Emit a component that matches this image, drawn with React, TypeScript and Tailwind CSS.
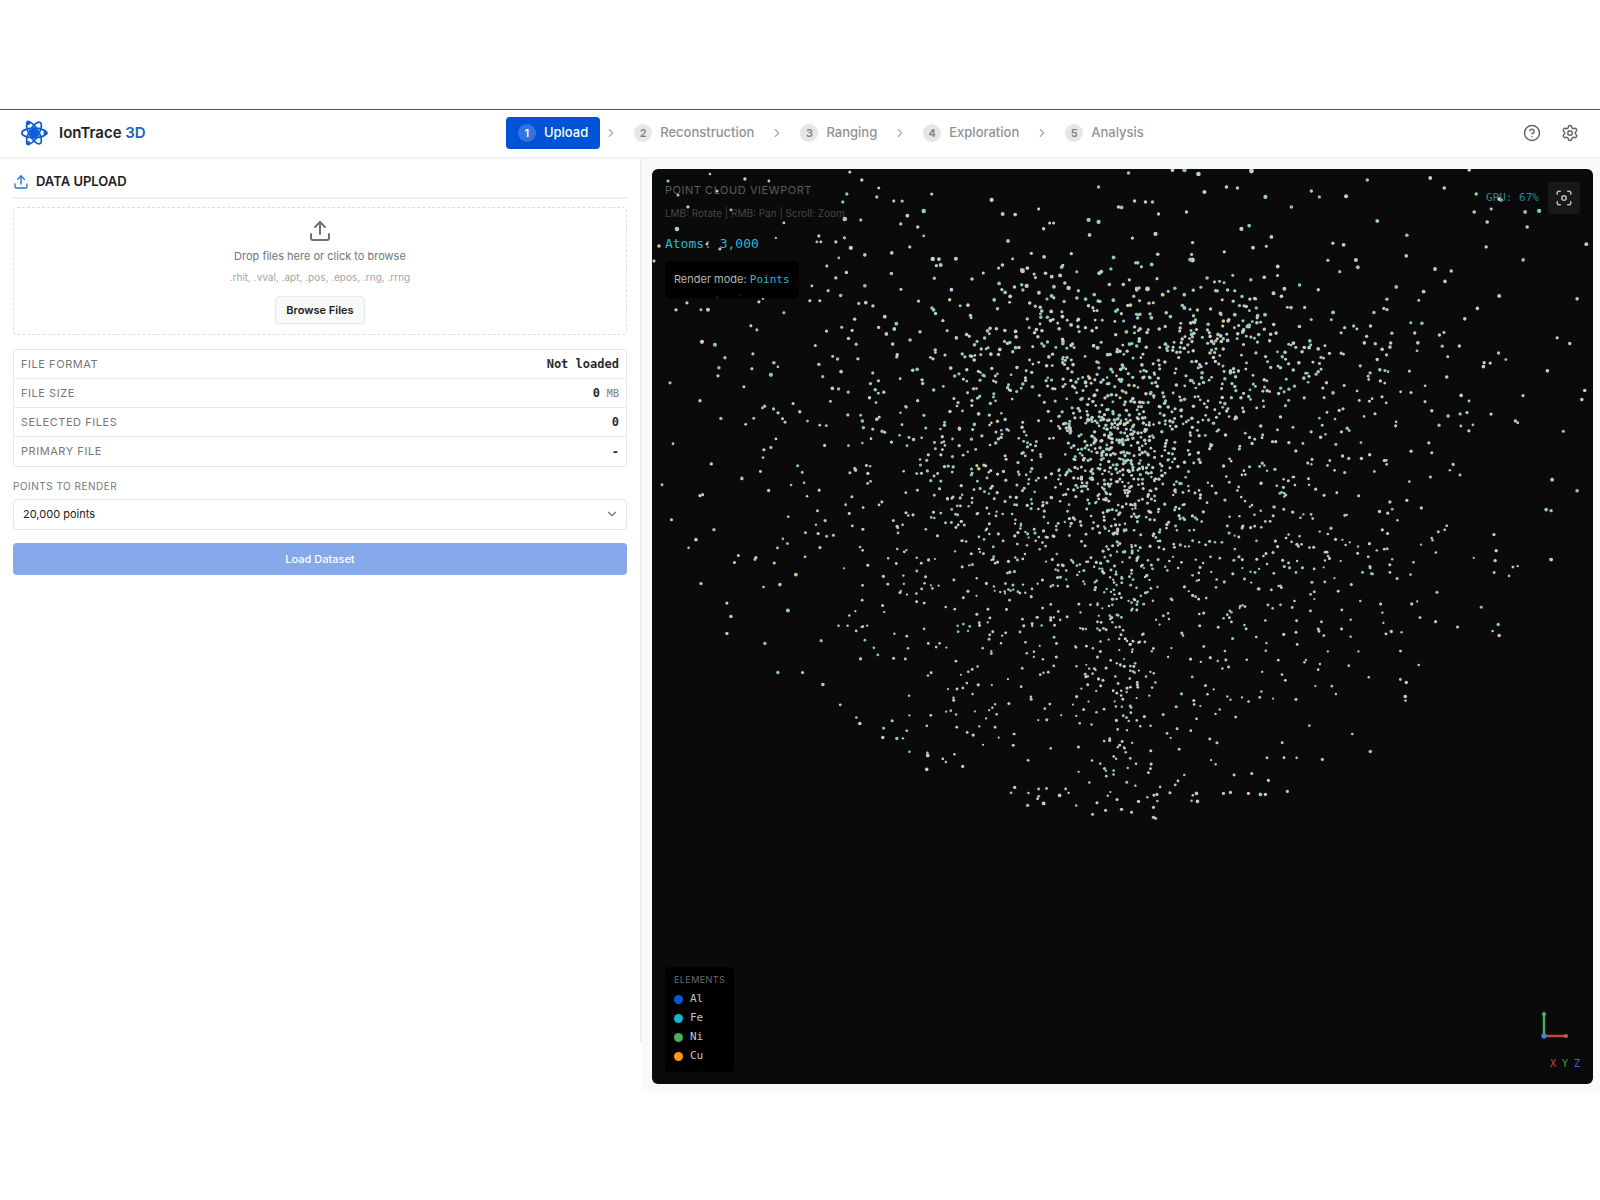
import React, { useMemo, useState } from 'react';
import { ChevronDown, ChevronRight, CircleHelp, Focus, Settings, Upload } from 'lucide-react';

type Point = { x: number; y: number; r: number; color: string };

const STEPS = ['Upload', 'Reconstruction', 'Ranging', 'Exploration', 'Analysis'];

const FILE_INFO = [
  { label: 'File Format', value: 'Not loaded' },
  { label: 'File Size', value: '0', unit: 'MB' },
  { label: 'Selected Files', value: '0' },
  { label: 'Primary File', value: '-' },
];

const ELEMENTS = [
  { name: 'Al', color: 'bg-[#0a56d6]' },
  { name: 'Fe', color: 'bg-[#17b5d0]' },
  { name: 'Ni', color: 'bg-[#4caf50]' },
  { name: 'Cu', color: 'bg-[#ff9810]' },
];

const POINT_COLORS = ['#c9cdca', '#c9cdca', '#c9cdca', '#8fc9bd', '#8fc9bd', '#a9d3ca', '#c9cdca', '#9fcfc4'];

// atoms close to the camera, [x, y, radius]
const NEAR_ATOMS = [
  [16, 12, 1.6], [58, 5, 1.3], [93, 10, 1.7], [117, 12, 1.4], [26, 26, 1.5], [65, 22, 1.6],
  [36, 38, 1.6], [79, 41, 1.4], [25, 60, 2.2], [7, 77, 1.8], [2, 92, 1.5], [55, 75, 1.5],
  [68, 80, 1.5], [132, 54, 1.4], [124, 69, 1.1], [198, 3, 1.6], [210, 11, 1.7], [227, 19, 1.5],
  [225, 28, 1.6], [195, 25, 1.7], [191, 33, 1.6], [242, 32, 1.5], [280, 25, 1.6], [272, 42, 2.2],
  [193, 50, 2.3], [209, 51, 1.6], [249, 55, 1.6], [266, 58, 1.7], [272, 67, 1.4], [167, 67, 1.6],
  [165, 73, 1.4], [169, 73, 1.4], [184, 73, 1.6], [199, 79, 2.1], [213, 86, 1.8], [187, 89, 1.3],
  [240, 84, 1.8], [258, 78, 1.6], [281, 90, 2.2], [289, 96, 2], [175, 97, 1.5], [184, 109, 1.7],
  [160, 117, 1.4], [65, 128, 1.3], [88, 126, 1.3], [35, 134, 1.6], [24, 141, 1.7], [49, 141, 1.5],
  [56, 141, 2], [107, 133, 1.6], [111, 130, 1.2], [132, 144, 1.5], [99, 157, 1.5], [105, 161, 1.6],
  [158, 132, 1.5], [168, 132, 1.5], [50, 173, 2.1], [63, 176, 2], [73, 189, 1.7], [67, 199, 1.7],
  [66, 207, 1.6], [101, 185, 1.6], [122, 194, 1.8], [126, 198, 1.3], [119, 206, 2.1], [100, 200, 1.5],
  [18, 214, 1.6], [48, 232, 1.7], [92, 218, 1.5], [21, 275, 1.4], [10, 316, 1.5], [48, 327, 1.6],
  [90, 310, 1.6], [44, 371, 1.8], [62, 361, 1.7], [104, 389, 1.6], [103, 391, 1.4], [49, 415, 1.6],
  [128, 416, 1.8], [144, 406, 1.9], [136, 442, 2], [79, 448, 1.8], [75, 465, 1.7], [113, 475, 1.7],
  [126, 504, 1.7], [171, 516, 1.8], [208, 555, 1.8], [231, 569, 1.7], [245, 570, 1.7], [276, 587, 1.9],
  [275, 601, 1.8], [311, 598, 1.6], [340, 31, 2.1], [387, 40, 1.5], [351, 45, 2], [398, 54, 1.5],
  [402, 54, 1.5], [437, 51, 2.1], [447, 53, 2.1], [438, 66, 1.9], [447, 18, 1.7], [467, 38, 1.8],
  [483, 32, 1.7], [494, 33, 1.7], [501, 33, 1.8], [477, 4, 1.8], [521, 1, 1.9], [533, 1, 2.2],
  [547, 5, 2.3], [553, 23, 2], [575, 18, 1.8], [586, 19, 1.8], [600, 2, 2.4], [614, 28, 2.1],
  [590, 60, 2.1], [541, 91, 2.5], [504, 65, 2.1], [507, 45, 1.7], [535, 43, 1.7], [620, 68, 1.9],
  [361, 90, 1.4], [371, 102, 2.3], [375, 117, 2.1], [496, 120, 2.4], [417, 119, 2.2], [400, 127, 2],
  [640, 38, 1.8], [660, 22, 1.7], [668, 28, 1.6], [716, 11, 1.8], [726, 52, 1.9], [779, 9, 1.9],
  [793, 19, 1.8], [755, 87, 1.8], [818, 1, 1.8], [825, 25, 1.7], [836, 53, 1.8], [823, 43, 1.8],
  [850, 31, 1.7], [848, 30, 1.9], [874, 43, 1.9], [840, 40, 1.5], [888, 42, 2.1], [876, 58, 1.8],
  [835, 78, 1.7], [926, 130, 1.8], [872, 91, 1.8], [848, 127, 2], [906, 169, 1.6], [900, 342, 1.7],
  [895, 341, 1.8], [901, 311, 1.9], [926, 322, 1.8], [900, 391, 1.9], [847, 456, 1.7], [848, 467, 1.8],
  [845, 382, 1.7], [844, 392, 1.7], [843, 404, 1.5], [754, 528, 1.8], [755, 514, 1.7], [719, 583, 1.8],
  [671, 591, 1.7], [740, 463, 1.7], [441, 646, 1.6], [454, 642, 1.6], [502, 649, 1.7], [504, 650, 1.7],
  [480, 644, 1.5], [545, 625, 1.8], [546, 633, 1.8], [609, 626, 1.9], [636, 623, 1.6], [392, 635, 1.9],
  [376, 637, 1.7], [363, 619, 1.7], [408, 627, 1.8], [470, 641, 1.7], [487, 633, 1.7], [502, 639, 1.6],
  [572, 625, 1.6], [579, 624, 1.6], [597, 625, 1.6], [614, 626, 1.7], [617, 612, 1.6],
];

function mulberry(seed: number) {
  let s = seed;
  return () => {
    s = (s + 0x6d2b79f5) | 0;
    let t = Math.imul(s ^ (s >>> 15), 1 | s);
    t = (t + Math.imul(t ^ (t >>> 7), 61 | t)) ^ t;
    return ((t ^ (t >>> 14)) >>> 0) / 4294967296;
  };
}

function buildCloud(): Point[] {
  const rand = mulberry(47);
  const gauss = () => Math.sqrt(-2 * Math.log(rand() + 1e-9)) * Math.cos(2 * Math.PI * rand());
  const pickColor = () => (rand() < 0.04 ? '#d3c88f' : rand() < 0.01 ? '#8fbfe0' : POINT_COLORS[Math.floor(rand() * POINT_COLORS.length)]);

  const cloud: Point[] = NEAR_ATOMS.map(([x, y, r]) => ({ x, y, r, color: pickColor() }));

  while (cloud.length < 2800) {
    const kind = rand();
    let x: number;
    let y: number;
    if (kind < 0.08) {
      x = 470 + gauss() * 16;
      y = 250 + Math.pow(rand(), 1.2) * 380;
    } else if (kind < 0.13) {
      x = 466 + gauss() * 28;
      y = 285 + gauss() * 34;
    } else if (kind < 0.145) {
      x = 395 + gauss() * 44;
      y = 175 + gauss() * 32;
    } else if (kind < 0.165) {
      x = 572 + gauss() * 38;
      y = 168 + gauss() * 28;
    } else if (kind < 0.74) {
      x = 470 + gauss() * 148;
      y = 275 + gauss() * 140;
    } else if (kind < 0.84) {
      x = 470 + gauss() * 180;
      y = 330 + rand() * 310;
    } else {
      x = 470 + gauss() * 255;
      y = 215 + gauss() * 110;
    }
    const dx = x - 470;
    // bowl shaped lower edge, thin upper rim
    if (y > 640 - dx * dx * 0.00125 || x < 8 || x > 936 || y < 4) continue;
    if (y < 150 && rand() > Math.pow(y / 150, 1.8)) continue;
    if (x < 160 && y < 230) continue;
    const near = 1 - Math.min(y, 400) / 400;
    cloud.push({ x, y, r: 1.1 + near * 0.5 + rand() * 0.5, color: pickColor() });
  }
  return cloud;
}

const AtomLogo: React.FC = () => (
  <svg viewBox="0 0 28 28" className="h-7 w-7" fill="none" stroke="#0b5cd5" strokeWidth="1.7" aria-hidden="true">
    <ellipse cx="14" cy="14" rx="12.2" ry="4.8" />
    <ellipse cx="14" cy="14" rx="12.2" ry="4.8" transform="rotate(60 14 14)" />
    <ellipse cx="14" cy="14" rx="12.2" ry="4.8" transform="rotate(120 14 14)" />
    <circle cx="14" cy="14" r="4.2" fill="#0b5cd5" stroke="none" />
    <circle cx="8.2" cy="3.8" r="2.2" fill="#0b5cd5" stroke="none" />
    <circle cx="8.2" cy="24.2" r="2.2" fill="#0b5cd5" stroke="none" />
    <circle cx="25.6" cy="14" r="2.2" fill="#0b5cd5" stroke="none" />
  </svg>
);

const Header: React.FC<{ active: number; onSelect: (i: number) => void }> = ({ active, onSelect }) => (
  <header className="flex h-[50px] items-center justify-between border-t border-t-[#555] border-b-2 border-b-[#f1f2f2] bg-white pr-[14px] pb-px pl-5">
    <a href="#" className="flex items-center gap-[11px]">
      <AtomLogo />
      <span className="text-[15px] font-semibold text-[#222] whitespace-nowrap">
        IonTrace <span className="text-[#1565c8]">3D</span>
      </span>
    </a>
    <nav className="flex items-center gap-1">
      {STEPS.map((step, i) => (
        <React.Fragment key={step}>
          {i > 0 && <ChevronRight className="h-[14px] w-[14px] text-[#aaa]" />}
          <button
            onClick={() => onSelect(i)}
            className={
              i === active
                ? 'flex h-8 items-center gap-2 rounded bg-[#0052d6] px-3 text-[13px] font-medium text-white'
                : 'flex h-8 items-center gap-2 rounded px-3 text-[13px] font-medium text-[#929292]'
            }
          >
            <span
              className={
                i === active
                  ? 'flex h-[18px] w-[18px] items-center justify-center rounded-full bg-white/20 text-[11px] font-semibold'
                  : 'flex h-[18px] w-[18px] items-center justify-center rounded-full bg-[#e6e6e6] text-[11px] font-semibold text-[#808080]'
              }
            >
              {i + 1}
            </span>
            {step}
          </button>
        </React.Fragment>
      ))}
    </nav>
    <div className="flex items-center gap-[6px] text-[#666]">
      <button aria-label="Help" className="flex h-8 w-8 items-center justify-center rounded">
        <CircleHelp className="h-[18px] w-[18px]" />
      </button>
      <button aria-label="Settings" className="flex h-8 w-8 items-center justify-center rounded">
        <Settings className="h-[18px] w-[18px]" />
      </button>
    </div>
  </header>
);

const UploadPanel: React.FC = () => {
  const [points, setPoints] = useState('20000');

  return (
    <aside className="mb-12 border-r-2 border-[#eceeee] bg-white px-[13px]">
      <h2 className="flex h-10 items-center gap-[7px] border-b-2 border-[#eeefef] pt-2 text-[13px] font-semibold text-[#222]">
        <Upload className="h-4 w-4 text-[#1976d2]" />
        DATA UPLOAD
      </h2>

      <div className="mt-2 flex h-32 flex-col items-center rounded border border-dashed border-[#dedede] pt-[11px]">
        <Upload className="h-6 w-6 text-[#707070]" />
        <p className="mt-[5px] text-[11px] leading-4 text-[#757575]">Drop files here or click to browse</p>
        <p className="mt-[5px] text-[10px] leading-4 text-[#a5a5a5]">.rhit, .vval, .apt, .pos, .epos, .rng, .rrng</p>
        <button className="mt-[11px] h-7 rounded border border-[#e8eaea] bg-[#f8f9f9] px-[10px] text-[11px] font-semibold text-[#222] shadow-xs">
          Browse Files
        </button>
      </div>

      <dl className="mt-[14px] divide-y divide-[#e9ebeb] rounded border border-[#e6e8e8]">
        {FILE_INFO.map((row) => (
          <div key={row.label} className="flex h-[29px] items-center justify-between px-[7px]">
            <dt className="text-[11px] tracking-wider text-[#777] uppercase">{row.label}</dt>
            <dd className="font-['DejaVu_Sans_Mono',monospace] text-xs font-semibold text-[#2c2c2c]">
              {row.value}
              {row.unit && <span className="ml-[7px] text-[10px] font-normal text-[#777]">{row.unit}</span>}
            </dd>
          </div>
        ))}
      </dl>

      <label htmlFor="points" className="mt-[11px] block text-[10px] leading-4 tracking-wider text-[#777] uppercase">
        Points to render
      </label>
      <div className="relative mt-[5px]">
        <select
          id="points"
          value={points}
          onChange={(e) => setPoints(e.target.value)}
          className="h-[31px] w-full appearance-none rounded border border-[#e4e6e6] bg-white px-[9px] text-[11px] text-[#222]"
        >
          <option value="20000">20,000 points</option>
          <option value="50000">50,000 points</option>
          <option value="100000">100,000 points</option>
        </select>
        <ChevronDown className="pointer-events-none absolute top-2 right-2 h-[14px] w-[14px] text-[#777]" />
      </div>

      <button disabled className="mt-[13px] h-8 w-full rounded bg-[#85a9ea] text-[11px] font-medium text-white">
        Load Dataset
      </button>
    </aside>
  );
};

const Viewport: React.FC = () => {
  const cloud = useMemo(buildCloud, []);

  return (
    <section className="relative overflow-hidden rounded-md bg-[#0a0a0a]">
      <svg className="absolute inset-0 h-full w-full" viewBox="0 0 942 916" preserveAspectRatio="xMidYMin slice" aria-hidden="true">
        {cloud.map((p, i) => (
          <circle key={i} cx={p.x} cy={p.y} r={p.r} fill={p.color} />
        ))}
      </svg>

      <div className="relative flex h-full flex-col justify-between px-[13px] pt-[13px] pb-3">
        <div className="flex items-start justify-between">
          <div>
            <h3 className="text-[11px] leading-4 tracking-wider text-[#5c5c5c]">POINT CLOUD VIEWPORT</h3>
            <p className="mt-[7px] text-[10px] leading-4 text-[#464646]">LMB: Rotate | RMB: Pan | Scroll: Zoom</p>
            <p className="mt-[13px] font-['DejaVu_Sans_Mono',monospace] text-[13px] leading-5 text-[#25b8cf]">Atoms: 3,000</p>
            <p className="mt-[7px] inline-block rounded bg-black/90 px-[9px] py-[10px] text-[11px] leading-4 text-[#b5b5b5]">
              Render mode: <span className="font-['DejaVu_Sans_Mono',monospace] text-[#35b5cf]">Points</span>
            </p>
          </div>
          <div className="flex items-center gap-[9px]">
            <span className="font-['DejaVu_Sans_Mono',monospace] text-[11px] text-[#238b91]">GPU: 67%</span>
            <button aria-label="Reset view" className="flex h-8 w-8 items-center justify-center rounded bg-[#181818] text-[#bbb]">
              <Focus className="h-[18px] w-[18px]" />
            </button>
          </div>
        </div>

        <div className="flex items-end justify-between">
          <div className="rounded bg-black px-[9px] pt-[5px] pb-[6px]">
            <h4 className="text-[9px] leading-4 tracking-wider text-[#6b6b6b]">ELEMENTS</h4>
            <ul className="mt-[2px]">
              {ELEMENTS.map((el) => (
                <li key={el.name} className="flex h-[19px] items-center gap-[7px] font-['DejaVu_Sans_Mono',monospace] text-[11px] text-[#c4c4c4]">
                  <span className={`h-[9px] w-[9px] rounded-full ${el.color}`} />
                  {el.name}
                </li>
              ))}
            </ul>
          </div>
          <div className="flex flex-col items-end">
            <svg width="40" height="32" viewBox="0 0 40 32" className="mb-[14px]" aria-hidden="true">
              <path d="M4 26V4" stroke="#4fae55" strokeWidth="2.4" />
              <path d="M4 26H26" stroke="#c8463c" strokeWidth="2.4" />
              <circle cx="4" cy="4" r="2" fill="#4fbb5a" />
              <circle cx="26" cy="26" r="2" fill="#d8544a" />
              <circle cx="4" cy="26" r="2.7" fill="#3d7fd8" />
            </svg>
            <p className="flex gap-[6px] font-['DejaVu_Sans_Mono',monospace] text-[10px] leading-4">
              <span className="text-[#c04444]">X</span>
              <span className="text-[#3b9c50]">Y</span>
              <span className="text-[#3d6bd0]">Z</span>
            </p>
          </div>
        </div>
      </div>
    </section>
  );
};

export default function App() {
  const [active, setActive] = useState(0);

  return (
    <div className="flex min-h-screen flex-col bg-white py-[109px] font-['Inter',sans-serif]">
      <Header active={active} onSelect={setActive} />
      <main className="grid flex-1 grid-cols-[67fr_100fr]">
        <UploadPanel />
        <div className="grid bg-[#f8fafa] pt-[10px] pr-[7px] pb-[7px] pl-[10px]">
          <Viewport />
        </div>
      </main>
    </div>
  );
}
